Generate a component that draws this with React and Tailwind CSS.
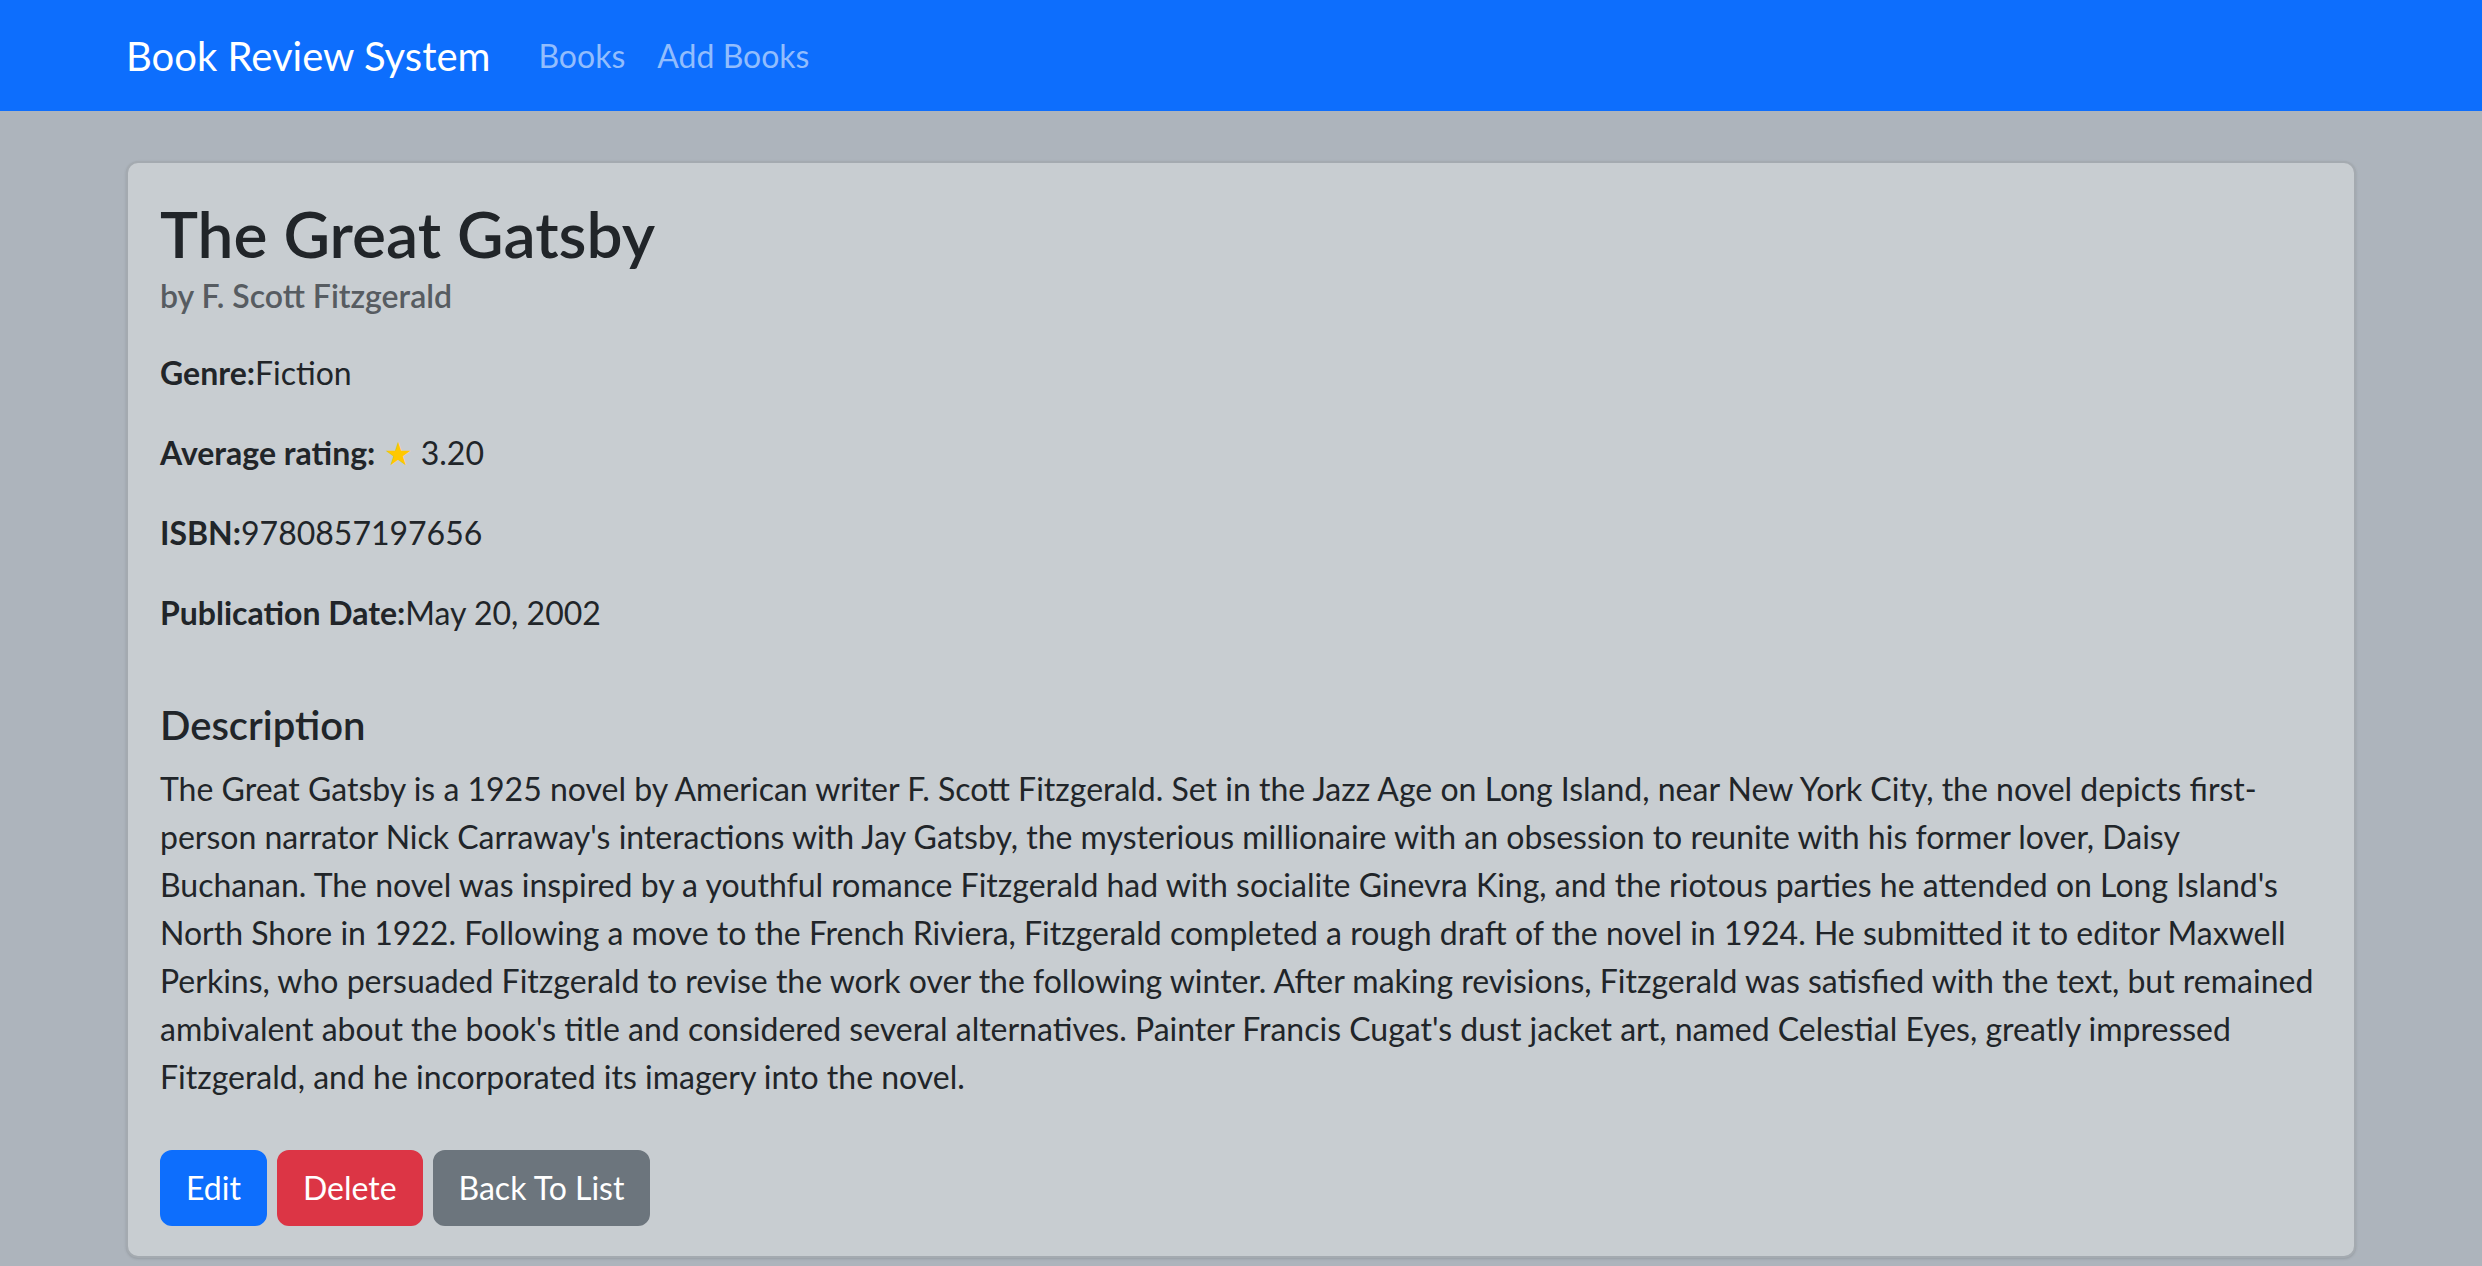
import React from "react";

const descriptionLines = [
  "The Great Gatsby is a 1925 novel by American writer F. Scott Fitzgerald. Set in the Jazz Age on Long Island, near New York City, the novel depicts first-",
  "person narrator Nick Carraway's interactions with Jay Gatsby, the mysterious millionaire with an obsession to reunite with his former lover, Daisy",
  "Buchanan. The novel was inspired by a youthful romance Fitzgerald had with socialite Ginevra King, and the riotous parties he attended on Long Island's",
  "North Shore in 1922. Following a move to the French Riviera, Fitzgerald completed a rough draft of the novel in 1924. He submitted it to editor Maxwell",
  "Perkins, who persuaded Fitzgerald to revise the work over the following winter. After making revisions, Fitzgerald was satisfied with the text, but remained",
  "ambivalent about the book's title and considered several alternatives. Painter Francis Cugat's dust jacket art, named Celestial Eyes, greatly impressed",
  "Fitzgerald, and he incorporated its imagery into the novel.",
];

const Navbar = () => (
  <nav className="bg-[#0d6efd] h-[111px]">
    <div className="w-[2230px] mx-auto h-full flex items-center">
      <a href="#" className="text-white text-[40px] leading-[60px] mr-[32px]">
        Book Review System
      </a>
      <a href="#" className="text-[#92bdfd] text-[32px] leading-[48px] px-[16px]">
        Books
      </a>
      <a href="#" className="text-[#92bdfd] text-[32px] leading-[48px] px-[16px]">
        Add Books
      </a>
    </div>
  </nav>
);

const BookDetail = () => {
  const book = {
    title: "The Great Gatsby",
    author: "F. Scott Fitzgerald",
    genre: "Fiction",
    rating: "3.20",
    isbn: "9780857197656",
    published: "May 20, 2002",
  };

  return (
    <div className="border-2 border-[#a4aab0] rounded-[12px] bg-[#c8cdd1] px-[32px] pt-[32px] pb-[30px] shadow-sm">
      <h2 className="text-[64px] leading-[77px] font-semibold">{book.title}</h2>
      <h6 className="mt-[5px] mb-[34px] text-[32px] leading-[38px] font-semibold text-[#575c61]">
        by {book.author}
      </h6>

      <p className="text-[32px] leading-[48px] mb-[32px]">
        <strong>Genre:</strong>
        {book.genre}
      </p>
      <p className="text-[32px] leading-[48px] mb-[32px]">
        <strong>Average rating:</strong> <span className="text-[#ffc800]">★</span> {book.rating}
      </p>
      <p className="text-[32px] leading-[48px] mb-[32px]">
        <strong>ISBN:</strong>
        {book.isbn}
      </p>
      <p className="text-[32px] leading-[48px]">
        <strong>Publication Date:</strong>
        {book.published}
      </p>

      <h5 className="mt-[64px] mb-[16px] text-[40px] leading-[48px] font-semibold">Description</h5>
      <p className="text-[32px] leading-[48px]">
        {descriptionLines.map((line) => (
          <span key={line} className="block whitespace-nowrap">
            {line}
          </span>
        ))}
      </p>

      <div className="mt-[49px] flex gap-[10px]">
        <button className="bg-[#0d6efd] text-white text-[32px] leading-[48px] px-[24px] py-[12px] border-2 border-[#0d6efd] rounded-[12px]">
          Edit
        </button>
        <button className="bg-[#dc3545] text-white text-[32px] leading-[48px] px-[24px] py-[12px] border-2 border-[#dc3545] rounded-[12px]">
          Delete
        </button>
        <button className="bg-[#6c757d] text-white text-[32px] leading-[48px] px-[24px] py-[12px] border-2 border-[#6c757d] rounded-[12px]">
          Back To List
        </button>
      </div>
    </div>
  );
};

export default function App() {
  return (
    <div className="min-h-screen bg-[#adb4bc] text-[#212529] font-['Lato',sans-serif]">
      <Navbar />
      <main className="w-[2230px] mx-auto pt-[50px] pb-[40px]">
        <BookDetail />
      </main>
    </div>
  );
}
